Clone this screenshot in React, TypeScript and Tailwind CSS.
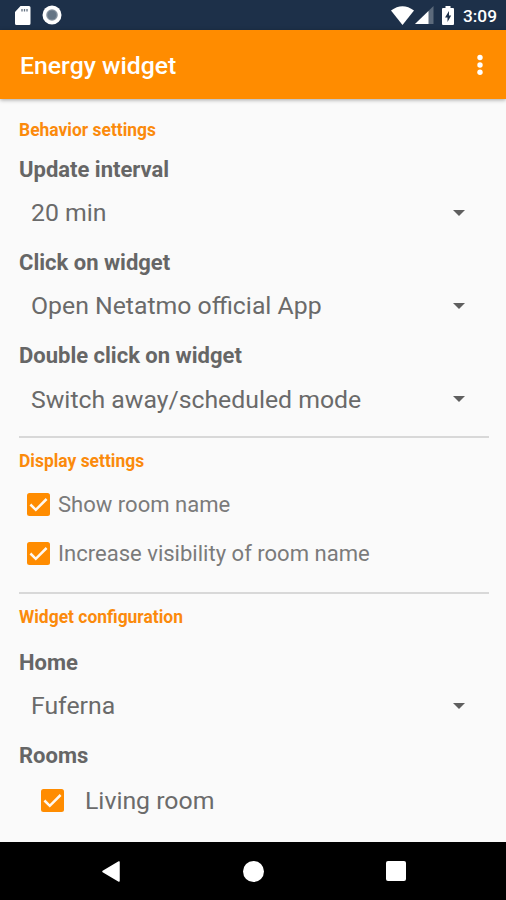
import React, { ReactNode } from "react";

function StatusBar() {
  return (
    <header className="flex h-[30px] shrink-0 items-center bg-[#1d3049] pl-[15px] pr-[9px] text-white">
      <svg width="16" height="19" viewBox="0 0 16 19" className="shrink-0">
        <path d="M5.500 0H14a1.500 1.500 0 0 1 1.500 1.500v16A1.500 1.500 0 0 1 14 19H1.500A1.500 1.500 0 0 1 0 17.500V6z" fill="currentColor" />
        <path d="M7 3v2.500M9.500 3v2.500M12 3v2.500" stroke="#627080" strokeWidth="1.300" />
      </svg>
      <svg width="20" height="20" viewBox="0 0 20 20" className="ml-[11px] shrink-0">
        <circle cx="10" cy="10" r="9.500" fill="white" />
        <circle cx="10" cy="10" r="5.800" fill="#8995a1" />
        <circle cx="10" cy="10" r="4.500" fill="#657585" />
      </svg>
      <div className="ml-auto flex items-center">
        <svg width="23" height="19" viewBox="0 0 23 19">
          <path d="M0 4.500Q11.500-4 23 4.500L11.500 19z" fill="currentColor" />
        </svg>
        <svg width="19" height="18" viewBox="0 0 19 18" className="ml-px">
          <path d="M18.500 0v18H0z" fill="#5c6a7b" />
          <path d="M13.500 4.900V18H0z" fill="currentColor" />
        </svg>
        <svg width="12" height="19" viewBox="0 0 12 19" className="ml-2">
          <path d="M3.500 0h5v2H11a1 1 0 0 1 1 1v15a1 1 0 0 1-1 1H1a1 1 0 0 1-1-1V3a1 1 0 0 1 1-1h2.500z" fill="currentColor" />
          <path d="M7 5 3 11.500h2.500V16l3.700-6.500H7z" fill="#1d3049" />
        </svg>
        <span className="ml-[9px] pt-[2px] text-[17.3px] font-medium leading-7">3:09</span>
      </div>
    </header>
  );
}

function AppBar() {
  return (
    <div className="relative flex h-[69px] shrink-0 items-center justify-between bg-[#ff8c00] pl-5 pr-[22px] text-white shadow-[0_1px_4px_rgba(0,0,0,0.35)]">
      <h1 className="pt-[2px] text-[24.8px] font-medium leading-[67px]">Energy widget</h1>
      <svg width="8" height="22" viewBox="0 0 8 22" fill="currentColor">
        <circle cx="4" cy="3.500" r="2.700" />
        <circle cx="4" cy="11" r="2.700" />
        <circle cx="4" cy="18.300" r="2.700" />
      </svg>
    </div>
  );
}

function SectionTitle({ children }: { children: ReactNode }) {
  return <h2 className="h-5 text-[17.45px] font-bold leading-5 text-[#fb8a0c]">{children}</h2>;
}

function FieldLabel({ children }: { children: ReactNode }) {
  return <h3 className="h-[29px] pt-[0.5px] text-[22px] font-bold leading-[29px] text-[#666666]">{children}</h3>;
}

function SelectRow({ label, value }: { label: string; value: string }) {
  return (
    <div className="h-[93.3px] shrink-0">
      <FieldLabel>{label}</FieldLabel>
      <div className="flex h-[59px] items-center justify-between pl-3 pr-6 text-[#6a6a6a]">
        <span className="text-[24.8px]">{value}</span>
        <svg width="12" height="6" viewBox="0 0 12 6">
          <path d="M0 0h12L6 6z" fill="#5f5f5f" />
        </svg>
      </div>
    </div>
  );
}

function CheckMark() {
  return (
    <svg width="23" height="23" viewBox="0 0 23 23" className="shrink-0">
      <rect width="23" height="23" rx="2.500" fill="#ff8c00" />
      <path d="m3.400 11.500 5.400 5.300L19.600 6" fill="none" stroke="#fff8ef" strokeWidth="2.500" />
    </svg>
  );
}

function CheckRow({ label }: { label: string }) {
  return (
    <div className="flex h-[49px] items-center gap-2">
      <CheckMark />
      <span>{label}</span>
    </div>
  );
}

export default function App() {
  return (
    <div className="flex h-[900px] w-[506px] flex-col overflow-hidden bg-[#fafafa] font-['Roboto',sans-serif]">
      <StatusBar />
      <AppBar />
      <main className="flex h-[743px] shrink-0 flex-col pl-[19px] pr-[17px]">
        <section className="flex h-[337px] shrink-0 flex-col pt-[21px]">
          <SectionTitle>Behavior settings</SectionTitle>
          <div className="pt-[14px]">
            <SelectRow label="Update interval" value="20 min" />
            <SelectRow label="Click on widget" value="Open Netatmo official App" />
            <SelectRow label="Double click on widget" value="Switch away/scheduled mode" />
          </div>
        </section>
        <section className="h-[156px] shrink-0 border-t-2 border-[#d8d8d8] pt-[13px]">
          <SectionTitle>Display settings</SectionTitle>
          <div className="pl-2 pt-[9px] text-[22.05px] text-[#7b7b7b]">
            <CheckRow label="Show room name" />
            <CheckRow label="Increase visibility of room name" />
          </div>
        </section>
        <section className="border-t-2 border-[#d8d8d8] pt-[13px]">
          <SectionTitle>Widget configuration</SectionTitle>
          <div className="pt-5">
            <SelectRow label="Home" value="Fuferna" />
            <FieldLabel>Rooms</FieldLabel>
            <div className="flex h-[62px] items-center gap-[21px] pl-[22px] text-[24.8px] text-[#6b6b6b]">
              <CheckMark />
              <span>Living room</span>
            </div>
          </div>
        </section>
      </main>
      <nav className="flex h-[58px] shrink-0 items-center justify-between bg-black pl-[102px] pr-[100px] text-white">
        <svg width="18" height="21" viewBox="0 0 18 21">
          <path d="M17 1v19L1 10.500z" fill="currentColor" stroke="currentColor" strokeWidth="1.500" strokeLinejoin="round" />
        </svg>
        <span className="ml-px size-[21px] rounded-full bg-white" />
        <span className="size-5 rounded-[2px] bg-white" />
      </nav>
    </div>
  );
}
